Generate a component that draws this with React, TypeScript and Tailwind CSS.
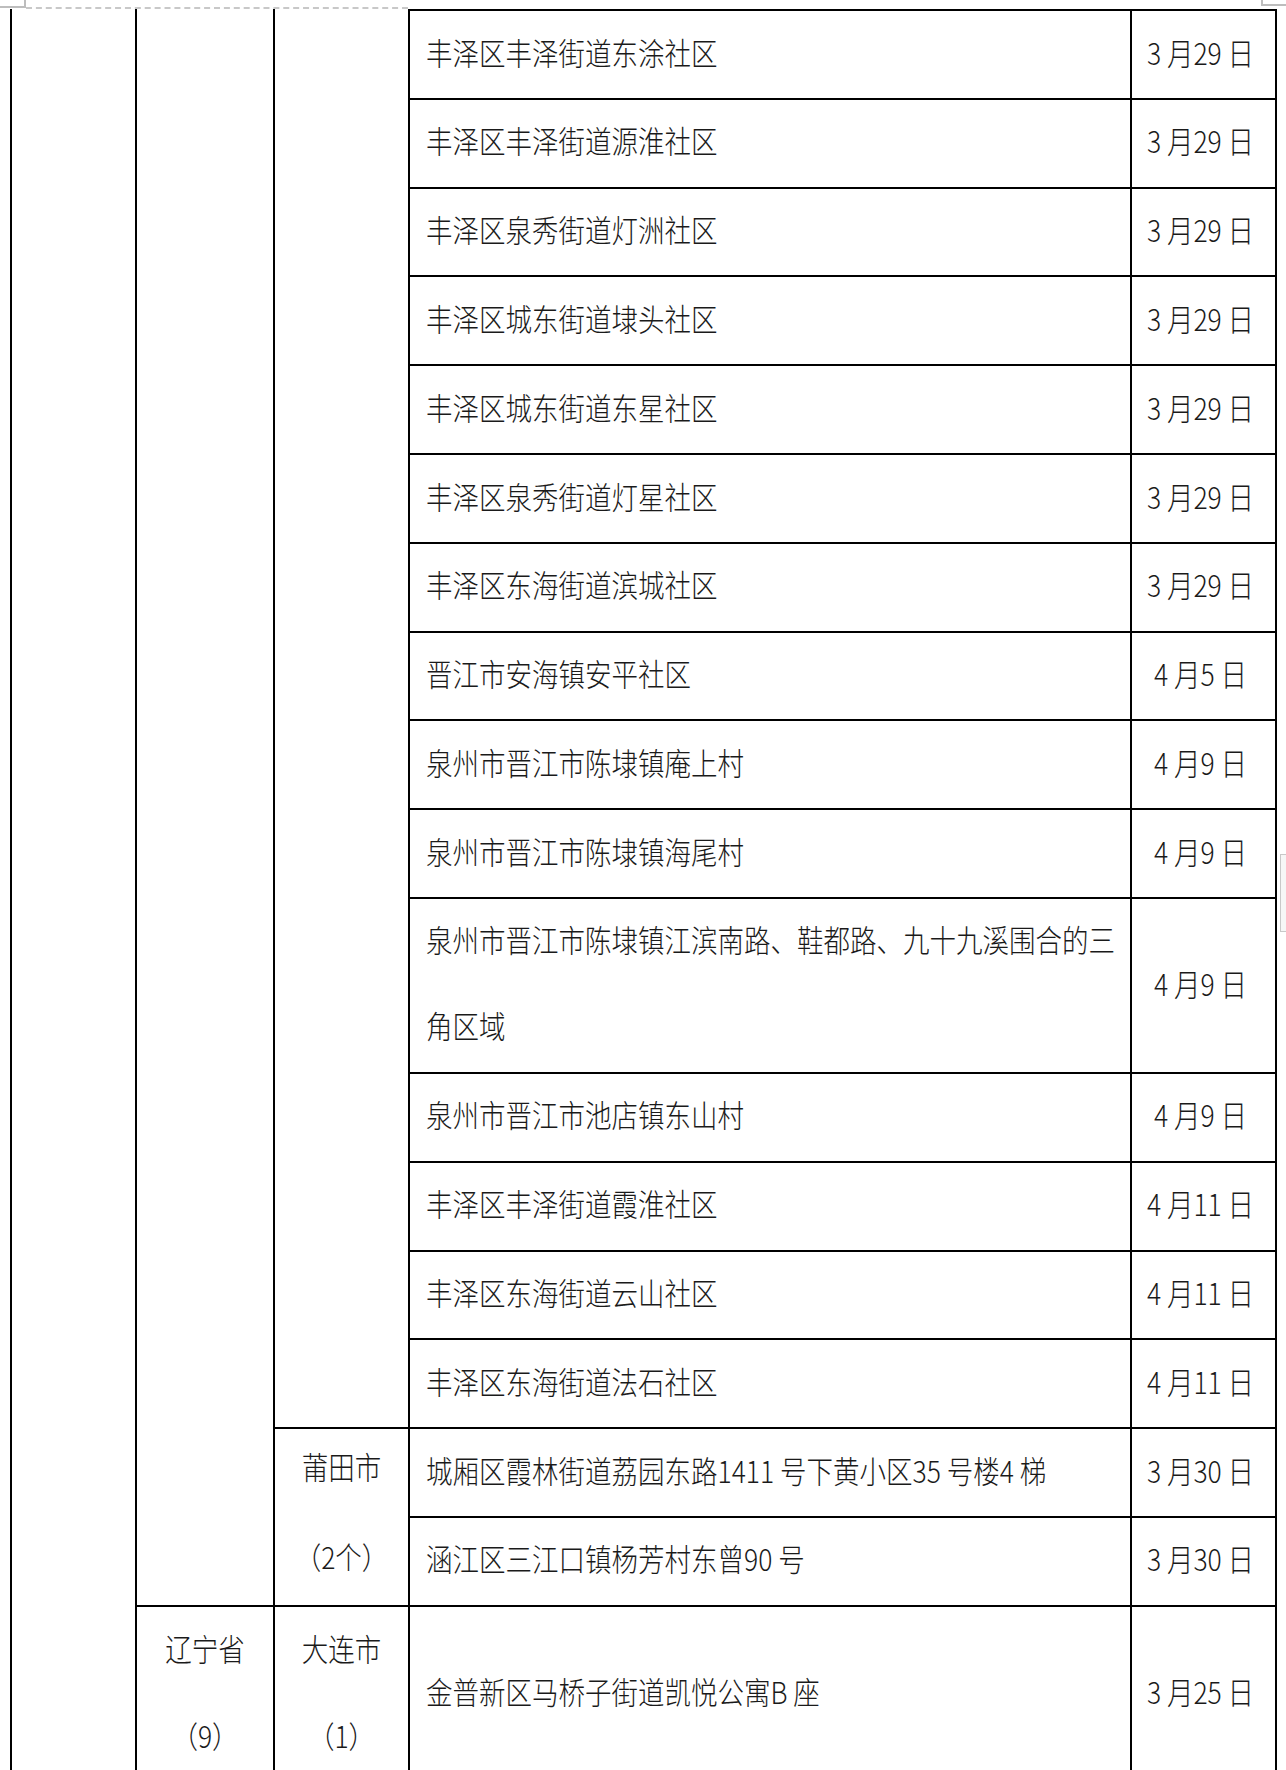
import React from "react";

const rows: { addr: React.ReactNode; date: string; tall?: boolean }[] = [
  { addr: "丰泽区丰泽街道东涂社区", date: "3 月29 日" },
  { addr: "丰泽区丰泽街道源淮社区", date: "3 月29 日" },
  { addr: "丰泽区泉秀街道灯洲社区", date: "3 月29 日" },
  { addr: "丰泽区城东街道埭头社区", date: "3 月29 日" },
  { addr: "丰泽区城东街道东星社区", date: "3 月29 日" },
  { addr: "丰泽区泉秀街道灯星社区", date: "3 月29 日" },
  { addr: "丰泽区东海街道滨城社区", date: "3 月29 日" },
  { addr: "晋江市安海镇安平社区", date: "4 月5 日" },
  { addr: "泉州市晋江市陈埭镇庵上村", date: "4 月9 日" },
  { addr: "泉州市晋江市陈埭镇海尾村", date: "4 月9 日" },
  {
    addr: (
      <>
        泉州市晋江市陈埭镇江滨南路、鞋都路、九十九溪围合的三
        <br />
        角区域
      </>
    ),
    date: "4 月9 日",
    tall: true,
  },
  { addr: "泉州市晋江市池店镇东山村", date: "4 月9 日" },
  { addr: "丰泽区丰泽街道霞淮社区", date: "4 月11 日" },
  { addr: "丰泽区东海街道云山社区", date: "4 月11 日" },
  { addr: "丰泽区东海街道法石社区", date: "4 月11 日" },
];

function T({ children }: { children: React.ReactNode }) {
  return (
    <span className="inline-block -translate-y-[3px] scale-y-[1.15] whitespace-nowrap">
      {children}
    </span>
  );
}

function AddrCell({ children, top, tall }: { children: React.ReactNode; top?: boolean; tall?: boolean }) {
  return (
    <div
      className={
        "flex items-center bg-white pl-[16px] " +
        (top ? "border-t-2 border-black " : "") +
        (tall ? "leading-[75px]" : "")
      }
    >
      <T>{children}</T>
    </div>
  );
}

function DateCell({ children, top }: { children: React.ReactNode; top?: boolean }) {
  return (
    <div
      className={
        "flex items-center justify-center bg-white pr-[6px] " +
        (top ? "border-t-2 border-black" : "")
      }
    >
      <T>{children}</T>
    </div>
  );
}

export default function App() {
  return (
    <div className="relative h-[1770px] w-[1286px] overflow-hidden bg-white font-['Liberation_Sans_Narrow','Noto_Sans_CJK_SC_Light','Noto_Sans_CJK_SC_DemiLight','Noto_Sans_CJK_SC',sans-serif] text-[26.5px] font-light text-[#1a1a1a]">
      {/* page corner marks */}
      <div className="absolute left-0 top-0 h-[8px] w-[26px] border-b-2 border-r-2 border-[#bdbdbd]" />
      <div className="absolute left-[26px] top-[7px] w-[382px] border-t-2 border-dashed border-[#c8c8c8]" />
      <div className="absolute left-[1261px] top-0 h-[6px] w-[25px] border-b-2 border-l-2 border-[#bdbdbd]" />
      <div className="absolute left-[1280px] top-[854px] h-[78px] w-[12px] border border-[#c8c8c8] bg-[#f6f6f6]" />

      <div className="ml-[10px] mt-[9px] grid w-[1267px] grid-cols-[123px_136px_133px_720px_143px] grid-rows-[88.8px_repeat(9,86.8px)_173px_repeat(6,86.8px)_174px] gap-[2px] bg-black px-[2px]">
        <div className="row-span-18 bg-white" />
        <div className="row-span-17 bg-white" />
        <div className="row-span-15 bg-white" />
        {rows.map((r, i) => (
          <React.Fragment key={i}>
            <AddrCell top={i === 0} tall={r.tall}>
              {r.addr}
            </AddrCell>
            <DateCell top={i === 0}>{r.date}</DateCell>
          </React.Fragment>
        ))}
        <div className="row-span-2 flex flex-col items-center justify-center bg-white pb-[5px] leading-[90px]">
          <T>莆田市</T>
          <T>（2个）</T>
        </div>
        <AddrCell>城厢区霞林街道荔园东路1411 号下黄小区35 号楼4 梯</AddrCell>
        <DateCell>3 月30 日</DateCell>
        <AddrCell>涵江区三江口镇杨芳村东曾90 号</AddrCell>
        <DateCell>3 月30 日</DateCell>
        <div className="flex flex-col items-center justify-center bg-white leading-[87px]">
          <T>辽宁省</T>
          <T>（9）</T>
        </div>
        <div className="flex flex-col items-center justify-center bg-white leading-[87px]">
          <T>大连市</T>
          <T>（1）</T>
        </div>
        <AddrCell>金普新区马桥子街道凯悦公寓B 座</AddrCell>
        <DateCell>3 月25 日</DateCell>
      </div>
    </div>
  );
}
